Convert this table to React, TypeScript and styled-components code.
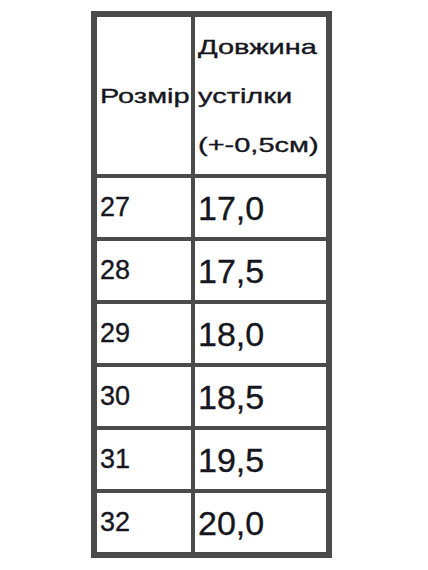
import React from 'react';
import styled, { createGlobalStyle } from 'styled-components';

const GlobalStyle = createGlobalStyle`
  html, body {
    margin: 0;
    padding: 0;
    background: #ffffff;
  }
`;

const Page = styled.div`
  padding: 11px 0 0 91px;
  font-family: 'Liberation Sans', Arial, sans-serif;
  color: #161620;
`;

const SizeTable = styled.table`
  border-collapse: separate;
  border-spacing: 4px;
  border: 2px solid #4b4b4b;
  background: #4b4b4b;
`;

const Cell = styled.td<{ $wide?: boolean; $big?: boolean; $head?: boolean }>`
  box-sizing: border-box;
  background: #ffffff;
  width: ${(p) => (p.$wide ? '131px' : '94px')};
  height: ${(p) => (p.$head ? '157px' : '59px')};
  padding: 0 3px;
  vertical-align: middle;
  text-align: left;
  font-size: ${(p) => (p.$head ? '21px' : p.$big ? '34px' : '27px')};
  line-height: ${(p) => (p.$head ? '49px' : '1')};
  white-space: nowrap;
  -webkit-text-stroke: 0.35px #161620;
`;

/* header text in the shot is drawn noticeably wider than plain Arial */
const WideText = styled.span`
  display: inline-block;
  transform: scaleX(1.38);
  transform-origin: left center;
`;

const rows = [
  ['27', '17,0'],
  ['28', '17,5'],
  ['29', '18,0'],
  ['30', '18,5'],
  ['31', '19,5'],
  ['32', '20,0'],
];

export default function App() {
  return (
    <Page>
      <GlobalStyle />
      <SizeTable>
        <tbody>
          <tr>
            <Cell $head>
              <WideText>Розмір</WideText>
            </Cell>
            <Cell $head $wide>
              <WideText>
                Довжина
                <br />
                устілки
                <br />
                (+-0,5см)
              </WideText>
            </Cell>
          </tr>
          {rows.map(([size, len]) => (
            <tr key={size}>
              <Cell>{size}</Cell>
              <Cell $wide $big>
                {len}
              </Cell>
            </tr>
          ))}
        </tbody>
      </SizeTable>
    </Page>
  );
}
